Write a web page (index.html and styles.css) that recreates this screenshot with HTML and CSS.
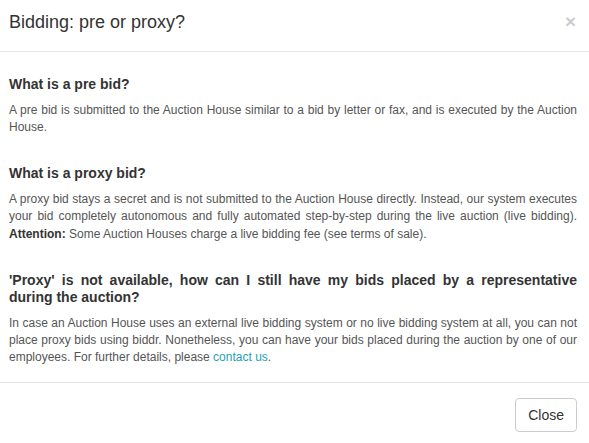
FILE: index.html
```html
<!DOCTYPE html>
<html lang="en">

<head>
    <meta charset="UTF-8">
    <meta name="viewport" content="width=device-width, initial-scale=1.0">
    <title>Bidding: pre or proxy?</title>
    <link rel="stylesheet" href="styles.css">
</head>

<body>
    <div class="modal">
        <div class="modal-header">
            <h4 class="modal-title">Bidding: pre or proxy?</h4>
            <button class="close" type="button">&times;</button>
        </div>

        <div class="modal-body">
            <h5>What is a pre bid?</h5>
            <p>A pre bid is submitted to the Auction House similar to a bid by letter or fax, and is executed by the Auction House.</p>

            <h5>What is a proxy bid?</h5>
            <p>A proxy bid stays a secret and is not submitted to the Auction House directly. Instead, our system executes your bid completely autonomous and fully automated step-by-step during the live auction (live bidding). <strong>Attention:</strong> Some Auction Houses charge a live bidding fee (see terms of sale).</p>

            <h5>'Proxy' is not available, how can I still have my bids placed by a representative during the auction?</h5>
            <p>In case an Auction House uses an external live bidding system or no live bidding system at all, you can not place proxy bids using biddr. Nonetheless, you can have your bids placed during the auction by one of our employees. For further details, please <a href="#">contact us</a>.</p>
        </div>

        <div class="modal-footer">
            <button class="btn" type="button">Close</button>
        </div>
    </div>
</body>

</html>
```

FILE: styles.css
```css
* {
    margin: 0;
    padding: 0;
    box-sizing: border-box;
}

body {
    background: #fff;
    font-family: "Liberation Sans", Arial, sans-serif;
    color: #333;
}

.modal {
    width: 589px;
}

/* header */
.modal-header {
    display: flex;
    justify-content: space-between;
    align-items: flex-start;
    padding: 9px 12px 16px 9px;
    border-bottom: 1px solid #e5e5e5;
}

.modal-title {
    font-size: 18px;
    font-weight: normal;
    line-height: 26px;
    color: #333;
}

.close {
    background: none;
    border: none;
    font-family: "Liberation Sans", Arial, sans-serif;
    font-size: 19px;
    font-weight: bold;
    line-height: 26px;
    color: #000;
    opacity: .2;
    margin-right: 1px;
}

/* body */
.modal-body {
    padding: 24px 12px 8px 9px;
}

.modal-body h5 {
    font-size: 14px;
    font-weight: bold;
    line-height: 17px;
    color: #333;
    text-align: justify;
    margin-bottom: 9px;
}

.modal-body p {
    font-size: 12px;
    line-height: 1.42857;
    color: #555;
    text-align: justify;
    margin-bottom: 29px;
}

.modal-body p:last-child {
    margin-bottom: 8px;
}

.modal-body p strong {
    color: #333;
}

.modal-body a {
    color: #1e9fb4;
    text-decoration: none;
}

/* footer */
.modal-footer {
    display: flex;
    justify-content: flex-end;
    padding: 15px 12px 15px 9px;
    border-top: 1px solid #e5e5e5;
}

.btn {
    font-family: "Liberation Sans", Arial, sans-serif;
    font-size: 14px;
    line-height: 20px;
    padding: 6px 12px;
    color: #333;
    background: #fff;
    border: 1px solid #ccc;
    border-radius: 4px;
}
```
